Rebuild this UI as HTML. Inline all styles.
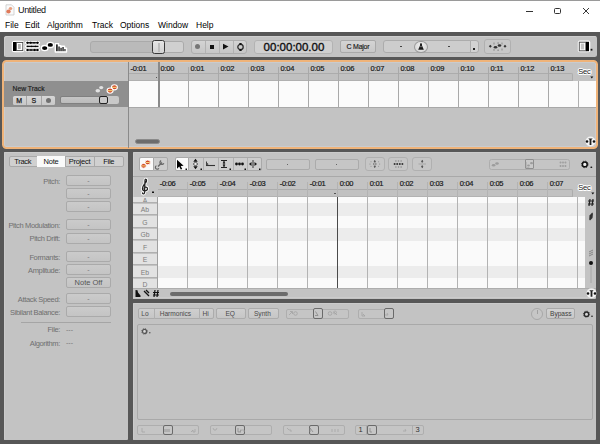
<!DOCTYPE html>
<html><head><meta charset="utf-8">
<style>
*{box-sizing:border-box;margin:0;padding:0}
html,body{width:600px;height:444px;overflow:hidden;background:#575757;font-family:"Liberation Sans",sans-serif;}
.a{position:absolute}
#title{left:0;top:0;width:600px;height:17px;background:#fff;border-top:1px solid #9a9a9a}
#menu{left:0;top:17px;width:600px;height:15px;background:#fff}
.mi{position:absolute;top:3px;font-size:8.5px;color:#000}
.panel{background:#c3c3c3;border-radius:1px;box-shadow:inset 1px 1px 0 #cbcbcb}
.btn{position:absolute;background:#cdcdcd;border:1px solid #a9a9a9;border-radius:2px}
.txt{position:absolute;font-size:7.5px;color:#222;white-space:nowrap}
.lbl{position:absolute;font-size:7.5px;letter-spacing:-0.35px;margin-top:-0.2px;color:#6f6f6f;white-space:nowrap;text-align:right}
.fld{position:absolute;left:66px;width:45px;height:11px;margin-top:-0.5px;border:1px solid #aaa;border-radius:2px;background:linear-gradient(#cbcbcb,#c4c4c4);font-size:7px;color:#777;text-align:center;line-height:9px}
.rl{position:absolute;font-size:7.5px;color:#1a1a1a;white-space:nowrap;letter-spacing:-0.25px;-webkit-text-stroke:0.2px #1a1a1a}
.tab{position:absolute;top:156px;height:11px;font-size:7.5px;letter-spacing:-0.25px;line-height:11.5px;text-align:center;color:#111}
.key{position:absolute;left:133px;width:24px;background:#e2e2e2;border-bottom:1.5px solid #b0b0b0;font-size:6.8px;text-align:center;color:#7c7c7c;overflow:hidden;padding-top:0.6px}
.bt{position:absolute;top:307.7px;height:11px;padding-right:1.2px;font-size:6.6px;line-height:11.5px;text-align:center;color:#4a4a4a}
.grp{position:absolute;border:1px solid #aeaeae;border-radius:2px;background:#c5c5c5}
.sel{position:absolute;border:1.5px solid #6a6a6a;border-radius:2px;background:#c6c6c6}
.sec{font-size:7.5px;letter-spacing:-0.2px;color:#1a1a1a;text-shadow:0 0 1px #fff,0 0 1px #fff,0 0 1.5px #fff,0 0 2px #fff}
</style></head><body>
<div id="title" class="a">
  <svg class="a" style="left:5px;top:2.5px" width="10" height="12"><path d="M1 0.8 H6.5 L9 3.3 V11 H1Z" fill="#fafafa" stroke="#c8c8c8" stroke-width="0.8"/><ellipse cx="3.5" cy="7.5" rx="2.2" ry="2" fill="#e07a5a"/><ellipse cx="5.5" cy="4.5" rx="1.8" ry="1.6" fill="#e9a080"/></svg>
  <div class="a" style="left:18px;top:3.5px;font-size:9px;letter-spacing:-0.35px;color:#111">Untitled</div>
  <div class="a" style="left:525.5px;top:9.5px;width:7.5px;height:1px;background:#333"></div>
  <div class="a" style="left:554px;top:6.5px;width:7px;height:6px;border:1.2px solid #333;border-radius:1.5px"></div>
  <svg class="a" style="left:582px;top:6px" width="8" height="8"><path d="M1 1 L7 7 M7 1 L1 7" stroke="#222" stroke-width="0.9"/></svg>
</div>
<div id="menu" class="a">
  <span class="mi" style="left:5px">File</span>
  <span class="mi" style="left:25px">Edit</span>
  <span class="mi" style="left:47px">Algorithm</span>
  <span class="mi" style="left:92px">Track</span>
  <span class="mi" style="left:120px">Options</span>
  <span class="mi" style="left:158px">Window</span>
  <span class="mi" style="left:196px">Help</span>
</div>

<!-- toolbar -->
<div class="a panel" style="left:3.8px;top:35.5px;width:593px;height:21.7px;border-radius:2.5px;box-shadow:inset 1px 1px 0 #cecece"></div>


<!-- toolbar contents -->
<svg class="a" style="left:11px;top:40px" width="58" height="13" viewBox="0 0 58 13">
  <rect x="0.8" y="0.8" width="12.5" height="11.5" fill="#fff" rx="2.5"/>
  <rect x="2" y="2" width="3" height="9" fill="#000"/>
  <rect x="5.4" y="2.4" width="6.4" height="8.2" fill="#fff" stroke="#444" stroke-width="0.9"/>
  <rect x="7" y="4" width="2.8" height="5" fill="#b4b4b4"/>
  <g stroke="#fff" stroke-width="3.2" stroke-linecap="round"><line x1="15.5" y1="2.8" x2="27.5" y2="2.8"/><line x1="15.5" y1="6.4" x2="27.5" y2="6.4"/><line x1="15.5" y1="10" x2="27.5" y2="10"/></g>
  <g stroke="#111" stroke-width="1.4"><line x1="15.5" y1="2.8" x2="27.5" y2="2.8"/><line x1="15.5" y1="6.4" x2="27.5" y2="6.4"/><line x1="15.5" y1="10" x2="27.5" y2="10"/></g>
  <g fill="#000"><path d="M15.2 2.8 l1.3 -1.3 l1.3 1.3 l-1.3 1.3z M18.5 2.8 l1.3 -1.3 l1.3 1.3 l-1.3 1.3z M25.3 2.8 l1.3 -1.3 l1.3 1.3 l-1.3 1.3z M22 2.8 l1 -0.9 l1 0.9 l-1 0.9z"/>
  <path d="M16 6.4 l0.9 -0.8 l0.9 0.8 l-0.9 0.8z M19.8 6.4 l0.9 -0.8 l0.9 0.8 l-0.9 0.8z M23.5 6.4 l0.9 -0.8 l0.9 0.8 l-0.9 0.8z"/>
  <path d="M15.2 10 l1.3 -1.3 l1.3 1.3 l-1.3 1.3z M19 10 l1 -0.9 l1 0.9 l-1 0.9z M22.3 10 l1.3 -1.3 l1.3 1.3 l-1.3 1.3z M25.3 10 l1.3 -1.3 l1.3 1.3 l-1.3 1.3z"/></g>
  <ellipse cx="33.7" cy="8.1" rx="3.3" ry="2.6" fill="#000" stroke="#fff" stroke-width="1.3"/>
  <ellipse cx="39.3" cy="4.9" rx="3.3" ry="2.6" fill="#000" stroke="#fff" stroke-width="1.3"/>
  <path d="M44.3 12 V3.6 h3.3 V5.7 h2.2 V6.2 h3.7 V8.2 h2 V12Z" fill="#fff" stroke="#fff" stroke-width="1.4" stroke-linejoin="round"/><g fill="#2e2e2e"><rect x="45" y="4.4" width="1.8" height="6.8"/><rect x="47.3" y="6.5" width="1.5" height="4.7"/><rect x="49.3" y="7.8" width="1.5" height="3.4"/><rect x="51.3" y="7" width="1.5" height="4.2"/><rect x="53.3" y="9" width="1.3" height="2.2"/></g>
</svg>
<div class="a" style="left:90px;top:40.5px;width:94px;height:12.8px;background:#bababa;border:1px solid #aaaaaa;border-radius:3px"></div>
<div class="a" style="left:164px;top:41.5px;width:19px;height:10.8px;background:#d0d0d0;border-radius:0 2px 2px 0"></div>
<div class="a" style="left:151.7px;top:40.2px;width:13.3px;height:13.5px;background:linear-gradient(#e6e6e6,#d2d2d2);border:1.4px solid #3a3a3a;border-radius:2.5px"></div>
<div class="a" style="left:157.5px;top:42.5px;width:0.7px;height:9px;background:#bdbdbd"></div><div class="a" style="left:159px;top:42.5px;width:0.7px;height:9px;background:#bdbdbd"></div>

<div class="a" style="left:190.5px;top:40px;width:56.5px;height:13.5px;background:linear-gradient(#d4d4d4,#c6c6c6);border:1px solid #adadad;border-radius:3px"></div>
<div class="a" style="left:204.5px;top:41px;width:1px;height:11.5px;background:#b2b2b2"></div>
<div class="a" style="left:218.8px;top:41px;width:1px;height:11.5px;background:#b2b2b2"></div>
<div class="a" style="left:233px;top:41px;width:1px;height:11.5px;background:#b2b2b2"></div>
<div class="a" style="left:194.8px;top:43.9px;width:5.6px;height:5.6px;border-radius:50%;background:#767676"></div>
<div class="a" style="left:209.7px;top:44.5px;width:4.4px;height:4.4px;background:#111"></div>
<svg class="a" style="left:221px;top:42px" width="10" height="9"><path d="M2 1.7 L7.5 4.6 L2 7.5Z" fill="#111"/></svg>
<svg class="a" style="left:235px;top:42px" width="10" height="10"><circle cx="5.5" cy="5" r="2.7" fill="none" stroke="#222" stroke-width="1.2"/><path d="M4 1 L7 1 L5.5 3.2Z M4 9 L7 9 L5.5 6.8Z" fill="#111"/></svg>

<div class="a" style="left:254px;top:39.8px;width:79px;height:14px;background:#d0d0d0;border:1px solid #b3b3b3;border-radius:3px"></div>
<div class="a" style="left:255px;top:40px;width:78px;height:13px;font-size:11.5px;line-height:14px;text-align:center;color:#111;-webkit-text-stroke:0.35px #111">00:00:00.00</div>

<div class="btn" style="left:339.7px;top:40.2px;width:36.6px;height:12.8px;background:linear-gradient(#d4d4d4,#c8c8c8);font-size:7px;letter-spacing:-0.25px;line-height:11px;text-align:center;color:#1a1a1a;-webkit-text-stroke:0.15px #1a1a1a">C Major</div>

<div class="a" style="left:383px;top:40px;width:88px;height:13px;background:#cdcdcd;border:1px solid #acacac;border-radius:3px 0 0 3px"></div>
<div class="a" style="left:470px;top:40px;width:9px;height:13px;background:#d2d2d2;border:1px solid #acacac;border-radius:0 3px 3px 0"></div>
<div class="a" style="left:472.5px;top:48px;width:2.5px;height:2px;background:#222"></div>
<div class="a" style="left:400px;top:46px;width:2px;height:1px;background:#444"></div>
<div class="a" style="left:448px;top:46px;width:2px;height:1px;background:#444"></div>
<div class="a" style="left:414.3px;top:40.5px;width:13.4px;height:12.5px;border-radius:50%;background:radial-gradient(circle at 50% 35%,#f0f0f0,#d0d0d0);border:1px solid #9a9a9a"></div>
<svg class="a" style="left:417px;top:42px" width="8" height="9"><path d="M4 1.5 L5 3.5 L6.8 7.8 L1.2 7.8 L3 3.5Z" fill="#1a1a1a"/><circle cx="4" cy="2.2" r="1" fill="#1a1a1a"/><rect x="3.2" y="4.5" width="1.6" height="0.6" fill="#ccc"/></svg>

<div class="btn" style="left:484.3px;top:39.3px;width:27px;height:14.4px;background:#c8c8c8;border-color:#b0b0b0;border-radius:3px"></div>
<svg class="a" style="left:484px;top:39px" width="28" height="15"><g fill="#333"><path d="M4.8 7.3 l1.5 -1.5 l1.5 1.5 l-1.5 1.5z M19.5 7.3 l1.5 -1.5 l1.5 1.5 l-1.5 1.5z"/><ellipse cx="11.5" cy="8.3" rx="1.8" ry="1.2"/><ellipse cx="15.5" cy="6.5" rx="1.8" ry="1.2"/></g>
<g fill="#8a8a8a"><rect x="9.5" y="3.5" width="1" height="2"/><rect x="13.5" y="3.3" width="1.2" height="1.5"/><rect x="17.5" y="3.5" width="1" height="2"/><rect x="9.5" y="10" width="1" height="1.8"/><rect x="13.5" y="10.5" width="1.2" height="1.5"/><rect x="17.5" y="9.5" width="1" height="2"/></g></svg>

<svg class="a" style="left:577px;top:40px" width="17" height="13"><rect x="0.8" y="0.5" width="12.5" height="11.8" rx="2" fill="#fff"/><rect x="2.3" y="2.2" width="6.5" height="8.6" fill="#fff" stroke="#555" stroke-width="1"/><rect x="3.8" y="3.6" width="3.3" height="5.8" fill="#c4c4c4"/><rect x="9" y="1.8" width="3" height="9.4" fill="#000"/><rect x="13.6" y="8.8" width="1.8" height="1.8" fill="#111"/></svg>

<!-- track area -->
<div class="a" style="left:2px;top:59.7px;width:596px;height:89px;border:2px solid #efb379;border-radius:4.5px;background:#c3c3c3;box-shadow:inset 0 0 0 0.8px #cbced2"></div>
<!-- track header row -->
<div class="a" style="left:3.5px;top:81px;width:125px;height:26.2px;background:#8f8f8f"></div>
<div class="a" style="left:12.5px;top:85.3px;font-size:6.8px;color:#1a1a1a;-webkit-text-stroke:0.15px #1a1a1a">New Track</div>
<div class="a" style="left:12.5px;top:95.5px;width:42.5px;height:9px;background:linear-gradient(#d6d6d6,#c8c8c8);border-radius:1.5px"></div>
<div class="a" style="left:26px;top:95.5px;width:1px;height:9px;background:#a5a5a5"></div>
<div class="a" style="left:40.5px;top:95.5px;width:1px;height:9px;background:#a5a5a5"></div>
<div class="a" style="left:12.5px;top:95.5px;width:13.5px;height:9px;font-size:7px;line-height:9px;text-align:center;color:#1a1a1a;-webkit-text-stroke:0.25px #1a1a1a">M</div>
<div class="a" style="left:27px;top:95.5px;width:13.5px;height:9px;font-size:7px;line-height:9px;text-align:center;color:#1a1a1a;-webkit-text-stroke:0.25px #1a1a1a">S</div>
<div class="a" style="left:45.5px;top:97.5px;width:5px;height:5px;border-radius:50%;background:#707070"></div>
<div class="a" style="left:59.8px;top:96.2px;width:59px;height:7.6px;background:linear-gradient(#c6c6c6,#bbbbbb);border:0.6px solid #808080;border-radius:2px"></div>
<div class="a" style="left:107px;top:96px;width:12px;height:7.5px;background:#c8c8c8;border-radius:0 2px 2px 0"></div>
<div class="a" style="left:99px;top:95.5px;width:8.5px;height:8.5px;background:#c9c9c9;border:1.5px solid #222;border-radius:2px"></div>
<svg class="a" style="left:94px;top:82px" width="26" height="13">
  <ellipse cx="3.8" cy="8.8" rx="2.3" ry="1.7" fill="#e2e2e2"/><ellipse cx="7.2" cy="5.6" rx="2.1" ry="1.6" fill="#e2e2e2"/>
  <ellipse cx="20.4" cy="5.3" rx="3" ry="2.6" fill="#d24a2a" stroke="#fff" stroke-width="1.1"/><ellipse cx="16.1" cy="8.6" rx="3" ry="2.6" fill="#d24a2a" stroke="#fff" stroke-width="1.1"/><rect x="18" y="4.8" width="4.8" height="1.1" fill="#f3d27a"/><rect x="13.7" y="8.1" width="4.8" height="1.1" fill="#f3d27a"/>
</svg>
<!-- vertical separator -->
<div class="a" style="left:128px;top:61.5px;width:1px;height:86px;background:#8a8a8a"></div>
<!-- ruler row 2 -->
<div class="a" style="left:129px;top:72.5px;width:444px;height:8.5px;background:#c0c0c0;border-top:1.3px solid #acacac;border-bottom:1px solid #b0b0b0;border-right:1px solid #acacac;border-radius:0 2px 0 0"></div>
<!-- lane -->
<div class="a" style="left:129px;top:81px;width:467px;height:26.5px;background:#fbfbfb;border-bottom:1px solid #a8a8a8"></div>
<div class="a" style="left:188px;top:67px;width:1px;height:39.5px;background:#a9a9a9"></div>
<div class="a" style="left:218px;top:67px;width:1px;height:39.5px;background:#a9a9a9"></div>
<div class="a" style="left:248px;top:67px;width:1px;height:39.5px;background:#a9a9a9"></div>
<div class="a" style="left:278px;top:67px;width:1px;height:39.5px;background:#a9a9a9"></div>
<div class="a" style="left:308px;top:67px;width:1px;height:39.5px;background:#a9a9a9"></div>
<div class="a" style="left:338px;top:67px;width:1px;height:39.5px;background:#a9a9a9"></div>
<div class="a" style="left:368px;top:67px;width:1px;height:39.5px;background:#a9a9a9"></div>
<div class="a" style="left:398px;top:67px;width:1px;height:39.5px;background:#a9a9a9"></div>
<div class="a" style="left:428px;top:67px;width:1px;height:39.5px;background:#a9a9a9"></div>
<div class="a" style="left:458px;top:67px;width:1px;height:39.5px;background:#a9a9a9"></div>
<div class="a" style="left:488px;top:67px;width:1px;height:39.5px;background:#a9a9a9"></div>
<div class="a" style="left:518px;top:67px;width:1px;height:39.5px;background:#a9a9a9"></div>
<div class="a" style="left:548px;top:67px;width:1px;height:39.5px;background:#a9a9a9"></div>

<div class="a" style="left:155.5px;top:76.5px;width:1.5px;height:1.5px;background:#555"></div>
<div class="rl" style="margin-top:-0.5px;left:130.5px;top:64px">-0:01</div>
<div class="rl" style="margin-top:-0.5px;left:160.5px;top:64px">0:00</div>
<div class="rl" style="margin-top:-0.5px;left:190.5px;top:64px">0:01</div>
<div class="rl" style="margin-top:-0.5px;left:220.5px;top:64px">0:02</div>
<div class="rl" style="margin-top:-0.5px;left:250.5px;top:64px">0:03</div>
<div class="rl" style="margin-top:-0.5px;left:280.5px;top:64px">0:04</div>
<div class="rl" style="margin-top:-0.5px;left:310.5px;top:64px">0:05</div>
<div class="rl" style="margin-top:-0.5px;left:340.5px;top:64px">0:06</div>
<div class="rl" style="margin-top:-0.5px;left:370.5px;top:64px">0:07</div>
<div class="rl" style="margin-top:-0.5px;left:400.5px;top:64px">0:08</div>
<div class="rl" style="margin-top:-0.5px;left:430.5px;top:64px">0:09</div>
<div class="rl" style="margin-top:-0.5px;left:460.5px;top:64px">0:10</div>
<div class="rl" style="margin-top:-0.5px;left:490.5px;top:64px">0:11</div>
<div class="rl" style="margin-top:-0.5px;left:520.5px;top:64px">0:12</div>
<div class="rl" style="margin-top:-0.5px;left:550.5px;top:64px">0:13</div>

<div class="a" style="left:158px;top:61.5px;width:2px;height:45px;background:#8a8a8a"></div>
<div class="a" style="left:578px;top:81px;width:1px;height:25.5px;background:#b0b0b0"></div>
<svg class="a" style="left:576px;top:65px" width="18" height="12"><text x="2.2" y="9" font-family="Liberation Sans" font-size="7.5" letter-spacing="-0.2" fill="#1a1a1a" stroke="#fff" stroke-width="2" stroke-linejoin="round" paint-order="stroke fill">Sec</text></svg>
<svg class="a" style="left:590px;top:76px" width="4" height="3"><path d="M0.3 0.5 h3 l-1.5 2z" fill="#111"/></svg>
<!-- scrollbar -->
<div class="a" style="left:134.7px;top:139.2px;width:25.3px;height:5px;background:#6c6c6c;border:0.6px solid #8a8a8a;border-radius:3px"></div>
<!-- bottom right icon -->
<svg class="a" style="left:584.2px;top:135.2px" width="13" height="13"><circle cx="6.5" cy="6.5" r="5" fill="#f2f2f2"/><circle cx="3" cy="6.5" r="1.3" fill="#111"/><circle cx="10" cy="6.5" r="1.3" fill="#111"/><path d="M4.3 3.4 h4.4 l-1.3 1.4 v5.2 h-1.8 v-5.2z" fill="#222"/></svg>
<!-- left inspector -->
<div class="a panel" style="left:3.5px;top:152px;width:124.5px;height:288px"></div>
<div class="a" style="left:8.5px;top:156px;width:115px;height:11px;background:#d0d0d0;border:1px solid #a9a9a9;border-radius:2px"></div>
<div class="a" style="left:37px;top:156px;width:28px;height:11px;background:#fafafa"></div>
<div class="a" style="left:65px;top:157px;width:1px;height:9px;background:#aaa"></div>
<div class="a" style="left:94px;top:157px;width:1px;height:9px;background:#aaa"></div>
<div class="tab" style="left:8.5px;width:28.5px">Track</div>
<div class="tab" style="left:37px;width:28px">Note</div>
<div class="tab" style="left:65px;width:29px">Project</div>
<div class="tab" style="left:94px;width:29.5px">File</div>

<div class="lbl" style="right:540px;top:177px">Pitch:</div>
<div class="fld" style="top:175.5px">-</div>
<div class="fld" style="top:188.5px">-</div>
<div class="fld" style="top:201.5px">-</div>
<div class="lbl" style="right:540px;top:221px">Pitch Modulation:</div>
<div class="fld" style="top:219.5px">-</div>
<div class="lbl" style="right:540px;top:234.5px">Pitch Drift:</div>
<div class="fld" style="top:233px">-</div>
<div class="lbl" style="right:540px;top:253px">Formants:</div>
<div class="fld" style="top:251.5px">-</div>
<div class="lbl" style="right:540px;top:266px">Amplitude:</div>
<div class="fld" style="top:264.5px">-</div>
<div class="fld" style="top:277.5px;color:#555;font-size:7.5px">Note Off</div>
<div class="lbl" style="right:540px;top:295px">Attack Speed:</div>
<div class="fld" style="top:293.5px">-</div>
<div class="lbl" style="right:540px;top:308px">Sibilant Balance:</div>
<div class="fld" style="top:306.5px"></div>
<div class="a" style="left:21px;top:322px;width:90px;height:1px;background:#a5a5a5"></div>
<div class="lbl" style="right:540px;top:325.5px">File:</div>
<div class="a" style="left:66px;top:325.5px;font-size:7px;color:#777">---</div>
<div class="lbl" style="right:540px;top:338.8px">Algorithm:</div>
<div class="a" style="left:66px;top:338.5px;font-size:7px;color:#777">---</div>
<!-- editor -->
<div class="a panel" style="left:132.5px;top:152px;width:463.5px;height:146.5px"></div>
<!-- editor toolbar -->
<div class="btn" style="left:139px;top:157px;width:29px;height:14px"></div>
<div class="a" style="left:139px;top:157px;width:14.5px;height:14px;background:#fafafa;border:1px solid #a9a9a9;border-radius:2px 0 0 2px"></div>
<div class="btn" style="left:174.5px;top:157px;width:87px;height:14px"></div>
<div class="a" style="left:174.5px;top:157px;width:14.5px;height:14px;background:#fafafa;border:1px solid #a9a9a9;border-radius:2px 0 0 2px"></div>
<div class="a" style="left:203px;top:158px;width:1px;height:12px;background:#b0b0b0"></div>
<div class="a" style="left:218px;top:158px;width:1px;height:12px;background:#b0b0b0"></div>
<div class="a" style="left:232.5px;top:158px;width:1px;height:12px;background:#b0b0b0"></div>
<div class="a" style="left:247px;top:158px;width:1px;height:12px;background:#b0b0b0"></div>
<svg class="a" style="left:139px;top:157px" width="125" height="14">
  <ellipse cx="8.7" cy="5.4" rx="2.7" ry="2.4" fill="#d24a2a" stroke="#fff" stroke-width="0.9"/><ellipse cx="4.6" cy="8.8" rx="2.7" ry="2.4" fill="#d24a2a" stroke="#fff" stroke-width="0.9"/><rect x="6.6" y="5" width="4.2" height="1" fill="#f3d27a"/><rect x="2.5" y="8.4" width="4.2" height="1" fill="#f3d27a"/>
  <path d="M19 9.5 L23 5.5" stroke="#666" stroke-width="1.5"/><path d="M22.2 3.6 a2 2 0 1 0 2.6 2.6" stroke="#666" stroke-width="1.3" fill="none"/><path d="M19.8 11.2 a1.8 1.8 0 1 1 -2.4 -2.4" stroke="#666" stroke-width="1.2" fill="none"/>
  <path d="M38 2.8 V11.8 L40.2 9.6 L41.8 12.6 L43.2 12 L41.7 9 L44.6 8.8Z" fill="#000"/>
  <rect x="46.5" y="11.5" width="1.5" height="1.5" fill="#111"/>
  <path d="M56.5 1.8 l2.2 3 h-4.4z M56.5 12.2 l2.2 -3 h-4.4z" fill="#111"/><ellipse cx="56.5" cy="7" rx="2" ry="1.4" fill="#fafafa" stroke="#222" stroke-width="0.7"/>
  <rect x="61.5" y="11.5" width="1.5" height="1.5" fill="#111"/>
  <path d="M67 8.5 h9" stroke="#333" stroke-width="1.1"/><path d="M67.5 8.5 v-4 M67.5 5.5 l1.2 1.2 v1.8" stroke="#333" stroke-width="0.9" fill="none"/>
  <path d="M82 3.5 h6 M82 10.5 h6 M85 3.5 v7" stroke="#222" stroke-width="1.2" fill="none"/><path d="M85 4.5 l-1.5 1.8 h3z M85 9.5 l-1.5 -1.8 h3z" fill="#222"/>
  <rect x="90.5" y="11.5" width="1.5" height="1.5" fill="#111"/>
  <g fill="#111"><circle cx="97.5" cy="7" r="1.4"/><circle cx="100.5" cy="7" r="1.4"/><circle cx="103.5" cy="7" r="1.4"/></g>
  <rect x="105.5" y="11.5" width="1.5" height="1.5" fill="#111"/>
  <path d="M114 3 v8" stroke="#333" stroke-width="1" fill="none"/><path d="M110 7 l2.5 -2 v4z M118 7 l-2.5 -2 v4z" fill="#111"/>
  <rect x="120" y="11.5" width="1.5" height="1.5" fill="#111"/>
</svg>
<div class="a" style="left:265.5px;top:159px;width:44px;height:10.5px;border:1px solid #ababab;border-radius:2px;background:#c6c6c6"></div>
<div class="a" style="left:314.5px;top:159px;width:44.5px;height:10.5px;border:1px solid #ababab;border-radius:2px;background:#c6c6c6"></div>
<div class="a" style="left:287px;top:164px;width:1px;height:1px;background:#666"></div>
<div class="a" style="left:336px;top:164px;width:1px;height:1px;background:#666"></div>
<div class="btn" style="left:365px;top:156.8px;width:19.8px;height:13.8px;background:#c6c6c6;border-color:#b0b0b0;border-radius:3px"></div>
<div class="btn" style="left:388.4px;top:156.8px;width:19.8px;height:13.8px;background:#c6c6c6;border-color:#b0b0b0;border-radius:3px"></div>
<div class="btn" style="left:412.4px;top:156.8px;width:19.2px;height:13.8px;background:#c6c6c6;border-color:#b0b0b0;border-radius:3px"></div>
<svg class="a" style="left:365px;top:157px" width="67" height="14">
  <circle cx="9.8" cy="7" r="1.3" fill="none" stroke="#666" stroke-width="0.7"/>
  <path d="M9.8 3 l1.2 1.8 h-2.4z M9.8 11 l1.2 -1.8 h-2.4z" fill="#333"/>
  <g fill="#8a8a8a"><circle cx="5" cy="7" r="0.6"/><circle cx="14.6" cy="7" r="0.6"/><circle cx="6" cy="4.8" r="0.5"/><circle cx="13.6" cy="4.8" r="0.5"/><circle cx="6" cy="9.2" r="0.5"/><circle cx="13.6" cy="9.2" r="0.5"/></g>
  <g fill="#333"><circle cx="29.6" cy="7" r="1"/><circle cx="32.2" cy="7" r="1"/><circle cx="34.8" cy="7" r="1"/><circle cx="37.4" cy="7" r="1"/></g>
  <g fill="#8a8a8a"><circle cx="30.9" cy="4" r="0.75"/><circle cx="33.5" cy="4" r="0.75"/><circle cx="36.1" cy="4" r="0.75"/><circle cx="30.9" cy="10" r="0.75"/><circle cx="33.5" cy="10" r="0.75"/><circle cx="36.1" cy="10" r="0.75"/></g>
  <path d="M53.5 7 h7.5" stroke="#999" stroke-width="0.7"/>
  <path d="M57.2 2.8 l1.2 2 h-2.4z M57.2 11.2 l1.2 -2 h-2.4z" fill="#333"/><path d="M57.2 4.5 v1.5 M57.2 8 v1.5" stroke="#555" stroke-width="0.7"/>
</svg>
<div class="a" style="left:489px;top:158.8px;width:80.5px;height:11px;border:1px solid #adadad;border-radius:2.5px;background:#c5c5c5"></div>
<div class="a" style="left:524.7px;top:158.7px;width:9.8px;height:10.8px;border:1px solid #8f8f8f;border-radius:1px;background:#c9c9c9"></div>
<svg class="a" style="left:489px;top:158.8px" width="81" height="11"><g fill="#9c9c9c"><ellipse cx="4.6" cy="6.2" rx="1.8" ry="1.3"/><ellipse cx="8" cy="4.5" rx="1.8" ry="1.3"/><ellipse cx="39.5" cy="6.5" rx="1.4" ry="1"/><ellipse cx="42.5" cy="4.2" rx="1.5" ry="1.1"/></g><path d="M37.3 3 v5.5 h3" stroke="#a5a5a5" stroke-width="0.6" fill="none"/>
<g fill="#9a9a9a"><circle cx="71.5" cy="3.5" r="0.9"/><circle cx="74" cy="3.5" r="0.9"/><circle cx="76.5" cy="3.5" r="0.9"/><circle cx="71.5" cy="7" r="0.9"/><circle cx="74" cy="7" r="0.9"/><circle cx="76.5" cy="7" r="0.9"/></g><path d="M71 3.5 h6 M71 7 h6" stroke="#a8a8a8" stroke-width="0.4"/></svg>
<svg class="a" style="left:580px;top:160px" width="14" height="9"><circle cx="4.8" cy="4.4" r="2.4" fill="#f0f0f0" stroke="#111" stroke-width="1.5"/><circle cx="4.8" cy="4.4" r="3.3" fill="none" stroke="#111" stroke-width="0.8" stroke-dasharray="1.2 1.4"/><ellipse cx="11.3" cy="7.2" rx="1" ry="0.8" fill="#111"/></svg>
<!-- ruler -->
<div class="a" style="left:133px;top:176px;width:463px;height:1px;background:#a9a9a9"></div>
<div class="a" style="left:158px;top:189px;width:415px;height:8px;background:#c1c1c1;border-top:1.2px solid #acacac;border-bottom:1px solid #b2b2b2;border-right:1px solid #acacac;border-radius:0 2px 0 0"></div>
<div class="a" style="left:158px;top:196.5px;width:427px;height:6.5px;background:#fafafa"></div>
<div class="key" style="top:197.0px;height:5.5px;line-height:5.5px">A</div>
<div class="a" style="left:158px;top:203px;width:427px;height:12.5px;background:#ececec"></div>
<div class="key" style="top:203.5px;height:11.5px;line-height:11.5px">Ab</div>
<div class="a" style="left:158px;top:215.5px;width:427px;height:12.5px;background:#fafafa"></div>
<div class="key" style="top:216.0px;height:11.5px;line-height:11.5px">G</div>
<div class="a" style="left:158px;top:228px;width:427px;height:12.5px;background:#ececec"></div>
<div class="key" style="top:228.5px;height:11.5px;line-height:11.5px">Gb</div>
<div class="a" style="left:158px;top:240.5px;width:427px;height:12.5px;background:#fafafa"></div>
<div class="key" style="top:241.0px;height:11.5px;line-height:11.5px">F</div>
<div class="a" style="left:158px;top:253px;width:427px;height:12.5px;background:#fafafa"></div>
<div class="key" style="top:253.5px;height:11.5px;line-height:11.5px">E</div>
<div class="a" style="left:158px;top:265.5px;width:427px;height:12.5px;background:#ececec"></div>
<div class="key" style="top:266.0px;height:11.5px;line-height:11.5px">Eb</div>
<div class="a" style="left:158px;top:278px;width:427px;height:12.5px;background:#fafafa"></div>
<div class="key" style="top:278.5px;height:11.5px;line-height:11.5px">D</div>
<div class="a" style="left:187px;top:182px;width:1px;height:107px;background:#b3b3b3"></div>
<div class="a" style="left:217px;top:182px;width:1px;height:107px;background:#b3b3b3"></div>
<div class="a" style="left:247px;top:182px;width:1px;height:107px;background:#b3b3b3"></div>
<div class="a" style="left:277px;top:182px;width:1px;height:107px;background:#b3b3b3"></div>
<div class="a" style="left:307px;top:182px;width:1px;height:107px;background:#b3b3b3"></div>
<div class="a" style="left:337px;top:182px;width:1px;height:107px;background:#b3b3b3"></div>
<div class="a" style="left:367px;top:182px;width:1px;height:107px;background:#b3b3b3"></div>
<div class="a" style="left:397px;top:182px;width:1px;height:107px;background:#b3b3b3"></div>
<div class="a" style="left:427px;top:182px;width:1px;height:107px;background:#b3b3b3"></div>
<div class="a" style="left:457px;top:182px;width:1px;height:107px;background:#b3b3b3"></div>
<div class="a" style="left:487px;top:182px;width:1px;height:107px;background:#b3b3b3"></div>
<div class="a" style="left:517px;top:182px;width:1px;height:107px;background:#b3b3b3"></div>
<div class="a" style="left:547px;top:182px;width:1px;height:107px;background:#b3b3b3"></div>
<div class="rl" style="margin-top:-0.5px;left:159.7px;top:179.3px">-0:06</div>
<div class="rl" style="margin-top:-0.5px;left:189.7px;top:179.3px">-0:05</div>
<div class="rl" style="margin-top:-0.5px;left:219.7px;top:179.3px">-0:04</div>
<div class="rl" style="margin-top:-0.5px;left:249.7px;top:179.3px">-0:03</div>
<div class="rl" style="margin-top:-0.5px;left:279.7px;top:179.3px">-0:02</div>
<div class="rl" style="margin-top:-0.5px;left:309.7px;top:179.3px">-0:01</div>
<div class="rl" style="margin-top:-0.5px;left:339.7px;top:179.3px">0:00</div>
<div class="rl" style="margin-top:-0.5px;left:369.7px;top:179.3px">0:01</div>
<div class="rl" style="margin-top:-0.5px;left:399.7px;top:179.3px">0:02</div>
<div class="rl" style="margin-top:-0.5px;left:429.7px;top:179.3px">0:03</div>
<div class="rl" style="margin-top:-0.5px;left:459.7px;top:179.3px">0:04</div>
<div class="rl" style="margin-top:-0.5px;left:489.7px;top:179.3px">0:05</div>
<div class="rl" style="margin-top:-0.5px;left:519.7px;top:179.3px">0:06</div>
<div class="rl" style="margin-top:-0.5px;left:549.7px;top:179.3px">0:07</div>

<div class="a" style="left:337px;top:196.5px;width:1px;height:92px;background:#4a4a4a"></div><div class="a" style="left:334px;top:192.5px;width:1.5px;height:1.5px;background:#555"></div>
<div class="a" style="left:577px;top:197px;width:1px;height:92px;background:#b3b3b3"></div>
<div class="a" style="left:157px;top:196.5px;width:1px;height:93px;background:#a0a0a0"></div>
<svg class="a" style="left:576px;top:180.5px" width="18" height="12"><text x="2.2" y="9" font-family="Liberation Sans" font-size="7.5" letter-spacing="-0.2" fill="#1a1a1a" stroke="#fff" stroke-width="2" stroke-linejoin="round" paint-order="stroke fill">Sec</text></svg>
<svg class="a" style="left:590.5px;top:191.5px" width="4" height="3"><path d="M0.3 0.5 h3 l-1.5 2z" fill="#111"/></svg>
<svg class="a" style="left:140px;top:177px" width="16" height="20"><g fill="none" stroke-linecap="round"><path d="M4.5 16 L5 3.5 C5 1.5 7 2 6.5 4 C6 6 2.5 8 2.5 11.5 C2.5 14.5 7.5 14.5 7.5 11.8 C7.5 9.5 4.5 9.5 4.2 11.5 M4.5 16 C4 17.5 2.5 17 2.5 16" stroke="#fff" stroke-width="3"/><path d="M4.5 16 L5 3.5 C5 1.5 7 2 6.5 4 C6 6 2.5 8 2.5 11.5 C2.5 14.5 7.5 14.5 7.5 11.8 C7.5 9.5 4.5 9.5 4.2 11.5 M4.5 16 C4 17.5 2.5 17 2.5 16" stroke="#222" stroke-width="1.3"/></g><rect x="12" y="14.5" width="2" height="1.5" fill="#111"/></svg>
<!-- bottom bar -->
<div class="a" style="left:132.5px;top:287.7px;width:463.5px;height:10.8px;background:#c3c3c3;border-top:1.1px solid #adadad;border-bottom:1px solid #cbcbcb"></div>
<svg class="a" style="left:134px;top:289px" width="30" height="9"><path d="M1.5 1 L3.5 1.3 L4 3.5 L6.5 6.5 L6.5 8 L1.5 8 Z" fill="#111"/><path d="M10 2 l5 5 M12 1 l3 3" stroke="#111" stroke-width="1.3"/><path d="M19 3.5 h6 M19 6 h6 M21 1 l-1 7 M24 1 l-1 7" stroke="#111" stroke-width="1.2"/></svg>
<div class="a" style="left:170px;top:291.5px;width:118px;height:4px;background:#6c6c6c;border-radius:2px"></div>
<!-- right side icons -->
<svg class="a" style="left:585px;top:197px" width="11" height="92"><path d="M3 4 h6 M3 7 h6 M5 2 l-1 7 M8 2 l-1 7" stroke="#222" stroke-width="1.2"/><path d="M7.2 15.5 L8 16.5 L7.5 21 L5 23.5 L4.2 22.5 L4.5 18.5 Z" fill="#333"/><path d="M4 55 l4 -2 M4 57 l4 -2 M4 59 l4 -2" stroke="#777" stroke-width="0.8"/><circle cx="6" cy="66" r="2" fill="#111"/><path d="M6 69 v17" stroke="#a0a0a0" stroke-width="0.8"/></svg>
<svg class="a" style="left:584.5px;top:287px" width="13" height="13"><circle cx="6.5" cy="6.3" r="5" fill="#f2f2f2"/><circle cx="3" cy="6.5" r="1.3" fill="#111"/><circle cx="10" cy="6.5" r="1.3" fill="#111"/><path d="M4.3 3.2 h4.4 l-1.3 1.4 v5.2 h-1.8 v-5.2z" fill="#222"/></svg>
<!-- bottom -->
<div class="a panel" style="left:133px;top:302.5px;width:463px;height:137.5px"></div>
<div class="a" style="left:137.5px;top:307.7px;width:76.5px;height:11.6px;background:linear-gradient(#cfcfcf,#c6c6c6);border:1px solid #acacac;border-radius:2px"></div>
<div class="a" style="left:216px;top:307.7px;width:29.5px;height:11.6px;background:linear-gradient(#cfcfcf,#c6c6c6);border:1px solid #acacac;border-radius:2px"></div>
<div class="a" style="left:247.5px;top:307.7px;width:31px;height:11.6px;background:linear-gradient(#cfcfcf,#c6c6c6);border:1px solid #acacac;border-radius:2px"></div>
<div class="a" style="left:153.5px;top:308.5px;width:1px;height:10px;background:#b0b0b0"></div>
<div class="a" style="left:198.5px;top:308.5px;width:1px;height:10px;background:#b0b0b0"></div>
<div class="bt" style="left:137.5px;width:16px">Lo</div>
<div class="bt" style="left:153.5px;width:45px">Harmonics</div>
<div class="bt" style="left:198.5px;width:15.5px">Hi</div>
<div class="bt" style="left:216px;width:29.5px">EQ</div>
<div class="bt" style="left:247.5px;width:31px">Synth</div>

<div class="grp" style="left:285.5px;top:308.5px;width:63px;height:10px"></div>
<div class="sel" style="left:312.5px;top:308px;width:10px;height:11px"></div>
<div class="grp" style="left:357.5px;top:308.5px;width:36px;height:10px"></div>
<div class="sel" style="left:384px;top:308px;width:9.5px;height:11px"></div>
<svg class="a" style="left:285px;top:308px" width="110" height="11"><g stroke="#a2a2a2" stroke-width="0.8" fill="none"><path d="M4 7 l3 -3 M5 3.5 h2.5 v2.5"/><circle cx="10.5" cy="5.5" r="1.8"/><circle cx="45" cy="5.5" r="1.8"/><path d="M49 4 l3 3 M50 3 a1.5 1.5 0 1 1 -0.1 0"/><path d="M30.5 3.5 l2.5 4 M30 7.5 h3" stroke="#888"/><path d="M77 4 v4 h3 M80 8 l-2 -2" /><path d="M100 7 h3 l-1 -2"/></g></svg>

<div class="a" style="left:531px;top:308px;width:12px;height:12px;border-radius:50%;border:1px solid #a8a8a8;background:#c6c6c6"></div>
<div class="a" style="left:536.5px;top:309.5px;width:1px;height:4.5px;background:#a0a0a0"></div>
<div class="btn" style="left:546.3px;top:308.4px;width:29px;height:10.4px;background:linear-gradient(#d2d2d2,#c8c8c8);font-size:6.6px;line-height:9px;text-align:center;color:#404040">Bypass</div>
<svg class="a" style="left:581.5px;top:309.5px" width="12" height="9"><circle cx="4.5" cy="4.2" r="2.2" fill="#d8d8d8" stroke="#2a2a2a" stroke-width="1.4"/><circle cx="4.5" cy="4.2" r="3.1" fill="none" stroke="#2a2a2a" stroke-width="0.8" stroke-dasharray="1.1 1.3"/><ellipse cx="10" cy="6.3" rx="0.9" ry="0.7" fill="#2a2a2a"/></svg>

<div class="a" style="left:136.5px;top:323.5px;width:456px;height:96.5px;border:1px solid #a9a9a9;border-radius:2px;background:#c3c3c3"></div>
<svg class="a" style="left:140px;top:327px" width="12" height="9"><circle cx="4.5" cy="4.4" r="2" fill="#dcdcdc" stroke="#555" stroke-width="1.3"/><circle cx="4.5" cy="4.4" r="2.9" fill="none" stroke="#555" stroke-width="0.8" stroke-dasharray="1.1 1.2"/><ellipse cx="9.8" cy="5.8" rx="0.8" ry="0.7" fill="#555"/></svg>

<div class="grp" style="left:137px;top:424.5px;width:62px;height:10.5px"></div>
<div class="sel" style="left:163px;top:424.5px;width:10px;height:10.5px"></div>
<div class="grp" style="left:209.5px;top:424.5px;width:62px;height:10.5px"></div>
<div class="sel" style="left:235px;top:424.5px;width:10px;height:10.5px"></div>
<div class="grp" style="left:282.5px;top:424.5px;width:62px;height:10.5px"></div>
<div class="sel" style="left:308.5px;top:424.5px;width:10px;height:10.5px"></div>
<div class="grp" style="left:355px;top:424.5px;width:68.5px;height:10.5px"></div>
<div class="a" style="left:366px;top:425px;width:1px;height:9.5px;background:#acacac"></div>
<div class="a" style="left:411.5px;top:425px;width:1px;height:9.5px;background:#acacac"></div>
<div class="sel" style="left:366.5px;top:424.5px;width:10px;height:10.5px"></div>
<div class="a" style="left:355px;top:425px;width:11px;height:10px;font-size:7.5px;line-height:10px;text-align:center;color:#333">1</div>
<div class="a" style="left:412px;top:425px;width:11px;height:10px;font-size:7.5px;line-height:10px;text-align:center;color:#333">3</div>
<svg class="a" style="left:137px;top:424px" width="290" height="12"><g stroke="#a5a5a5" stroke-width="0.8" fill="none">
<path d="M5 4 v4 h3"/><path d="M54 8 l2 -2 v2 h2 v-3"/><path d="M28 5 v3 M30 5 v3 M32 5 v3" stroke="#8a8a8a"/>
<path d="M76 4 l1 2 h2 l1 -2"/><path d="M103 6 h4 v2"/><path d="M101 4 v4 h3 M103 8 l1 -2" stroke="#8c8c8c"/>
<path d="M150 4 l2 2 h2 v2"/><path d="M173 4 l3 4 M173 8 v-4" stroke="#8a8a8a"/><path d="M195 5 v3 M198 5 v3 M201 5 v3"/>
<path d="M233 4 v4 h2" stroke="#8c8c8c"/><path d="M266 7 h3 M268 5 l1 2"/></g></svg>
</body></html>
